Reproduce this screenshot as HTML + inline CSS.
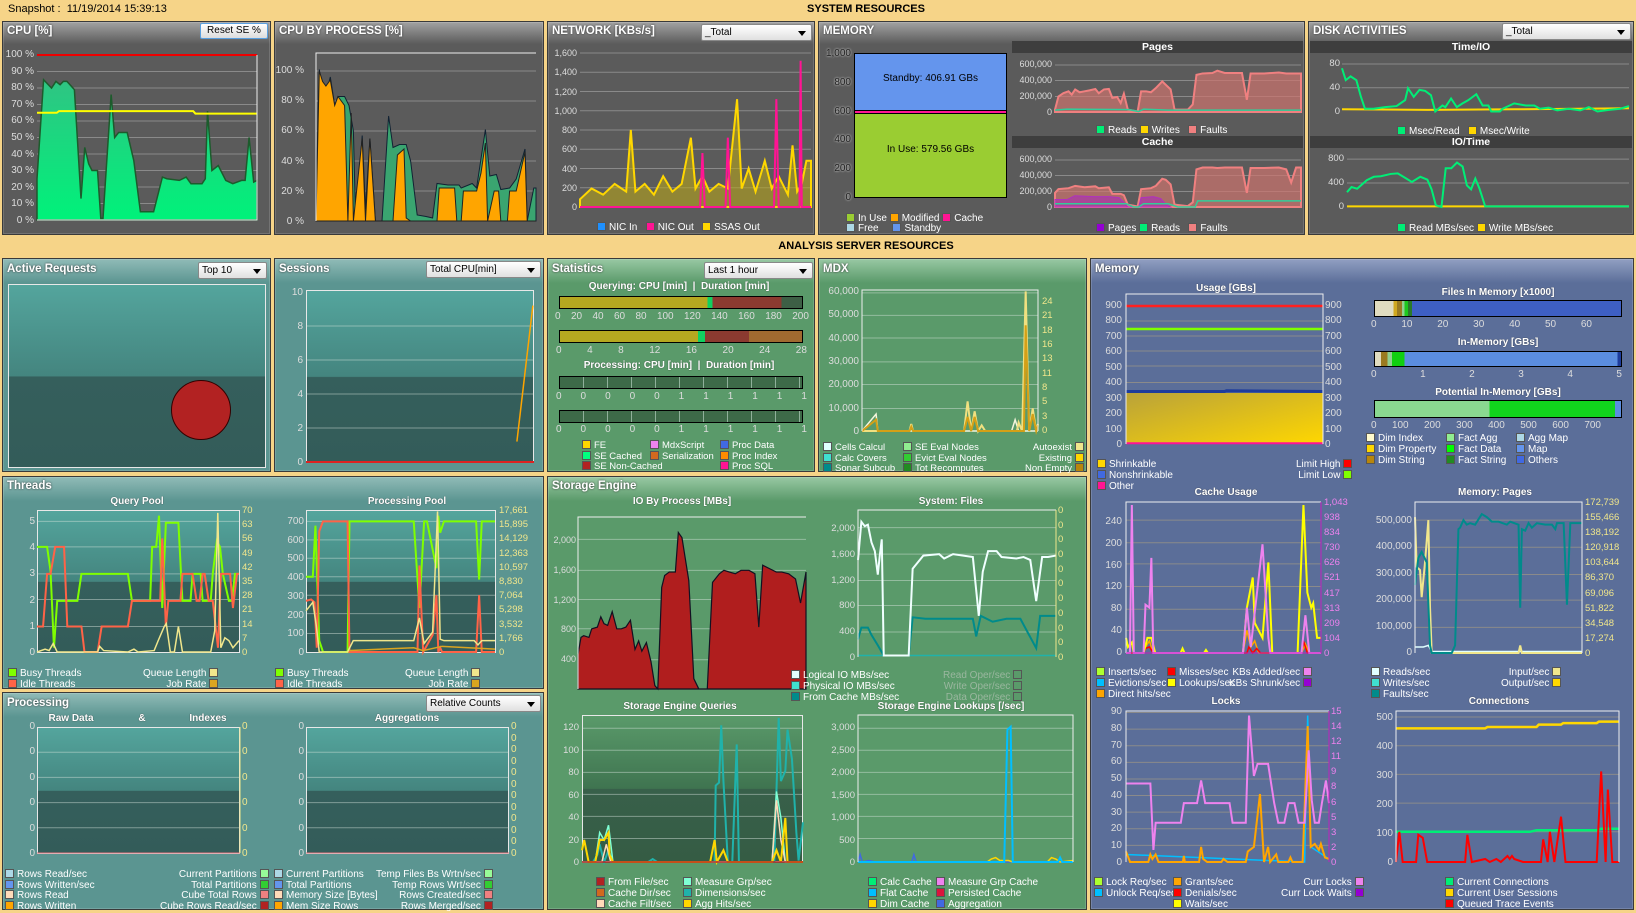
<!DOCTYPE html>
<html><head><meta charset="utf-8">
<style>
*{box-sizing:border-box}
body{margin:0;width:1636px;height:913px;overflow:hidden;background:#f6d488;font-family:"Liberation Sans",sans-serif;font-size:10px;position:relative}
.a{position:absolute}
.p{position:absolute;border:1px solid #3a3a3a;box-shadow:inset 0 0 0 1px rgba(255,255,255,.15)}
.gr{background:linear-gradient(#a2a2a2,#5b5b5b 22px,#5b5b5b)}
.te{background:linear-gradient(#90bbb7,#5b9591 24px,#5b9591)}
.gn{background:linear-gradient(#98c8a3,#5a9a6a 24px,#5a9a6a)}
.bl{background:linear-gradient(#919fc2,#5b6e99 24px,#5b6e99)}
.t{position:absolute;color:#fff;font-weight:bold;font-size:11.5px;text-shadow:0 0 2px #333;white-space:nowrap}
.s{position:absolute;color:#fff;font-weight:bold;font-size:10px;white-space:nowrap;transform:translateX(-50%);text-shadow:0 0 1px #333}
.yl{position:absolute;display:flex;flex-direction:column;justify-content:space-between;text-align:right;line-height:11px;color:#ddd;font-size:10px;white-space:nowrap}
.yr{text-align:left;color:#f0e68c}
.xl{position:absolute;display:flex;justify-content:space-between;color:#ddd;font-size:10px;line-height:11px}
.lg{position:absolute;color:#fff;font-size:10px;line-height:10px;white-space:nowrap}
.q{display:inline-block;width:9px;height:9px;border:1px solid #555;vertical-align:-1px;margin-right:3px}
.qr{margin:0 0 0 3px}
.dd{position:absolute;height:17px;border:1px solid #888;border-radius:2px;background:linear-gradient(#fff,#e0e0e0);font-size:10px;line-height:15px;padding-left:3px;color:#000}
.dd:after{content:"";position:absolute;right:5px;top:6px;border:4px solid transparent;border-top:5px solid #000}
.btn{position:absolute;border:1px solid #5aa0e0;border-radius:2px;background:linear-gradient(#fff,#dcdcdc);font-size:10px;line-height:14px;text-align:center;color:#000}
.pl{position:absolute;border:1px solid #e8e8e8}
.tg{background:linear-gradient(#54a59d,#44857f 50%,#355f5c 50.5%,#335c59)}
svg.c{position:absolute;overflow:visible}
svg.c *{vector-effect:non-scaling-stroke;fill:none;stroke-width:2}
svg.c .gl{stroke:#8a8a8a;stroke-width:1}
svg.c .gt{stroke:rgba(220,230,225,.45);stroke-width:1}
.band{position:absolute;background:#3e3e3e;color:#fff;font-weight:bold;text-align:center;font-size:10.5px;line-height:12px}
</style></head><body>

<div class="a" style="left:8px;top:3px;font-size:11px">Snapshot :&nbsp; 11/19/2014 15:39:13</div>
<div class="a" style="left:866px;top:3px;font-size:11px;font-weight:bold;transform:translateX(-50%)">SYSTEM RESOURCES</div>
<div class="a" style="left:866px;top:240px;font-size:11px;font-weight:bold;transform:translateX(-50%)">ANALYSIS SERVER RESOURCES</div>

<div class="p gr" style="left:2px;top:21px;width:269px;height:214px"></div>
<div class="t" style="left:7px;top:25px">CPU [%]</div>
<div class="btn" style="left:200px;top:23px;width:68px;height:16px">Reset SE %</div>
<div class="yl" style="left:3px;top:49px;width:31px;height:177px"><div>100 %</div><div>90 %</div><div>80 %</div><div>70 %</div><div>60 %</div><div>50 %</div><div>40 %</div><div>30 %</div><div>20 %</div><div>10 %</div><div>0 %</div></div>
<svg class="c" style="left:37px;top:55px;width:220px;height:165px" viewBox="0 0 100 100" preserveAspectRatio="none">
<defs><linearGradient id="cg" x1="0" y1="0" x2="0" y2="1"><stop offset="0" stop-color="#2fc483"/><stop offset="1" stop-color="#00f27a"/></linearGradient></defs>
<path class="gl" d="M0 10H100M0 20H100M0 30H100M0 40H100M0 50H100M0 60H100M0 70H100M0 80H100M0 90H100"/>
<polygon style="fill:url(#cg);stroke:#1d5b2c;stroke-width:1.5" points="0,100 0,75 3,15 6.6,20 8.6,16 10.5,18 12,16 13.6,16 15,18 17,21 20,87 21.7,56 23.5,66 25,70 27.5,70 29,99 30,99 33.7,24 35.3,50 37.1,47 41,47 44,64 47,95 50,95 53,95 57,74 59,75 64.7,76 67.8,74 70,78 75,78 76.5,75 77.5,34 79.5,70 82.4,67 85.8,76 89,78 93,76 94.6,76 96.4,50 98.5,77 100,76 100,100"/>
<path style="stroke:#e00;stroke-width:2" d="M0 0H100"/>
<polyline style="stroke:#ff0;stroke-width:2" points="0,35 9,35 10,34 71,34 72,35.5 100,35.5"/>
<path style="stroke:#eee;stroke-width:1" d="M100 0V100H0"/>
</svg>

<div class="p gr" style="left:274px;top:21px;width:270px;height:214px"></div>
<div class="t" style="left:279px;top:25px">CPU BY PROCESS [%]</div>
<div class="yl" style="left:270px;top:65px;width:34px;height:162px"><div>100 %</div><div>80 %</div><div>60 %</div><div>40 %</div><div>20 %</div><div>0 %</div></div>
<svg class="c" style="left:316px;top:53px;width:220px;height:168px" viewBox="0 0 100 112" preserveAspectRatio="none">
<path class="gl" d="M0 12H100M0 32H100M0 52H100M0 72H100M0 92H100"/>
<polygon style="fill:#3aa570;stroke:#123;stroke-width:1" points="0,112 0,97 1.5,11 3,27 4.5,28 6.5,16 8.5,35 10,29 13,29 15,35 17,52 18,112 21,55 22.5,104 24.5,57 27,112 30,112 33,42 35,63 38,61 41,61 43,72 46,108 50,109 53,110 55,87 60,88 65,88 66,90 71,87 73,90 77,51 79,82 82,81 84,91 88,90 91,84 95,64 96,112 99,90 100,90 100,112"/>
<polygon style="fill:#ffa500;stroke:#222;stroke-width:1" points="0,112 0,110 1.5,12 3,19 4.5,22 6.5,18 8.5,35 10,29 13,35 14.5,112 16,40 17,112 21,57 22.5,112 24.5,57 27,112 30,112 35,112 37,68 40,64 41,110 43,112 55,112 56,90 63,90 64,112 66,112 67,92 73,92 75,80 77,60 78,112 81,92 83,92 84,112 87,112 88,92 91,92 95,66 96,112 99,112 100,112"/>
<path style="stroke:#eee;stroke-width:1" d="M0 112V0H100"/>
</svg>

<div class="p gr" style="left:547px;top:21px;width:268px;height:214px"></div>
<div class="t" style="left:552px;top:25px">NETWORK [KBs/s]</div>
<div class="dd" style="left:701px;top:24px;width:111px">_Total</div>
<div class="yl" style="left:548px;top:48px;width:29px;height:165px;font-size:9px"><div>1,600</div><div>1,400</div><div>1,200</div><div>1,000</div><div>800</div><div>600</div><div>400</div><div>200</div><div>0</div></div>
<svg class="c" style="left:580px;top:53px;width:231px;height:154px" viewBox="0 0 100 100" preserveAspectRatio="none">
<path class="gl" d="M0 0H100M0 12.5H100M0 25H100M0 37.5H100M0 50H100M0 62.5H100M0 75H100M0 87.5H100"/>
<polygon style="fill:rgba(190,170,20,.55);stroke:#ffd700;stroke-width:2" points="0,100 0,95 5,88 10,92 15,85 20,90 22,50 24,90 28,85 32,92 36,80 40,90 44,85 48,55 50,88 53,80 56,90 60,85 64,88 68,30 70,88 73,75 76,90 80,70 83,88 86,80 90,92 92,60 94,90 96,85 98,70 100,70 100,100"/>
<polyline style="stroke:#ff1493;stroke-width:2" points="0,100 52,100 53,65 54,100 63,100 64,55 65,100 84,100 85,30 86,100 95,100 95.5,5 96,100 100,100"/>
</svg>
<div class="lg" style="left:597px;top:222px"><span class="q" style="background:#1e90ff"></span>NIC In &nbsp; <span class="q" style="background:#ff1493"></span>NIC Out &nbsp; <span class="q" style="background:#ffd700"></span>SSAS Out</div>

<div class="p gr" style="left:818px;top:21px;width:487px;height:214px"></div>
<div class="t" style="left:823px;top:25px">MEMORY</div>
<div class="yl" style="left:818px;top:48px;width:33px;height:155px;color:#222;text-shadow:0 0 2px #fff"><div>1,000</div><div>800</div><div>600</div><div>400</div><div>200</div><div>0</div></div>
<div class="a" style="left:854px;top:53px;width:153px;height:145px;border:1px solid #000;background:#9acd32">
<div class="a" style="left:0;top:0;width:151px;height:57px;background:#6495ed;border-bottom:1px solid #000"></div>
<div class="a" style="left:0;top:57px;width:151px;height:3px;background:#ff1493;border-bottom:1px solid #000"></div>
<div class="a" style="left:0;top:19px;width:151px;text-align:center;font-size:10px">Standby: 406.91 GBs</div>
<div class="a" style="left:0;top:90px;width:151px;text-align:center;font-size:10px">In Use: 579.56 GBs</div>
</div>
<div class="lg" style="left:846px;top:213px"><span class="q" style="background:#9acd32"></span>In Use <span class="q" style="background:#ffa500"></span>Modified <span class="q" style="background:#ff1493"></span>Cache</div>
<div class="lg" style="left:846px;top:223px"><span class="q" style="background:#add8e6"></span>Free &nbsp;&nbsp;&nbsp;&nbsp;<span class="q" style="background:#6495ed"></span>Standby</div>
<div class="band" style="left:1012px;top:41px;width:291px">Pages</div>
<div class="yl" style="left:1008px;top:59px;width:44px;height:59px;font-size:9px"><div>600,000</div><div>400,000</div><div>200,000</div><div>0</div></div>
<svg class="c" style="left:1055px;top:65px;width:246px;height:47px" viewBox="0 0 100 100" preserveAspectRatio="none">
<path class="gl" d="M0 0H100M0 33H100M0 67H100"/>
<polygon style="fill:rgba(205,115,110,.7);stroke:#f08080;stroke-width:2" points="0,100 0,95 1.4,67 3.4,60 5.5,56 6.8,63 8.2,52 10,58 12,56 14,54 16.4,51 17.8,60 19.9,52 21.9,51 23.3,70 25.3,68 26.7,81 28,61 29.6,95 33.6,99 35,56 37,56 39,58 41,49 43.6,35 45,42 47,52 48.6,95 54,95 56,84 57.5,21 60,18 64,17 66,12 69,17 76,17 78,74 79.5,18 85,18 91,16 94,18 100,18 100,100"/>
<polyline style="stroke:#3c9;stroke-width:1.5" points="0,96 5,94 30,95 34,99 36,94 46,96 100,96"/>
</svg>
<div class="lg" style="left:1096px;top:125px"><span class="q" style="background:#00ee76"></span>Reads <span class="q" style="background:#ffd700"></span>Writes &nbsp; <span class="q" style="background:#f08080"></span>Faults</div>
<div class="band" style="left:1012px;top:136px;width:291px">Cache</div>
<div class="yl" style="left:1008px;top:154px;width:44px;height:59px;font-size:9px"><div>600,000</div><div>400,000</div><div>200,000</div><div>0</div></div>
<svg class="c" style="left:1055px;top:160px;width:246px;height:47px" viewBox="0 0 100 100" preserveAspectRatio="none">
<path class="gl" d="M0 0H100M0 33H100M0 67H100"/>
<polygon style="fill:rgba(205,115,110,.7);stroke:#f08080;stroke-width:2" points="0,100 0,70 1.4,62 5.5,60 8.2,55 12,58 16.4,56 17.8,60 21.9,58 23.3,72 26.7,72 28,75 29.6,95 33.6,99 35,62 39,60 41,55 43.6,40 45,42 47,52 48.6,95 54,98 56,90 57.5,20 60,16 64,16 66,17 69,16 76,16 78,70 79.5,17 85,17 91,16 94,20 96,48 98,16 100,16 100,100"/>
<polygon style="fill:rgba(170,40,190,.55);stroke:#b030c0;stroke-width:1" points="0,100 0,84 5,84 8,76 16,78 22,78 26,80 28,90 29.6,100 34,100 35,80 40,78 43,82 45,94 47,100 0,100"/>
<polyline style="stroke:#3c9;stroke-width:1.5" points="0,93 29,93 32,100 34,100 36,93 46,93 50,100 57,100 58,87 100,87"/>
</svg>
<div class="lg" style="left:1096px;top:223px"><span class="q" style="background:#9400d3"></span>Pages <span class="q" style="background:#00ee76"></span>Reads &nbsp; <span class="q" style="background:#f08080"></span>Faults</div>

<div class="p gr" style="left:1308px;top:21px;width:326px;height:214px"></div>
<div class="t" style="left:1313px;top:25px">DISK ACTIVITIES</div>
<div class="dd" style="left:1502px;top:23px;width:129px">_Total</div>
<div class="band" style="left:1310px;top:41px;width:322px">Time/IO</div>
<div class="yl" style="left:1320px;top:58px;width:20px;height:59px;font-size:9.5px"><div>80</div><div>40</div><div>0</div></div>
<svg class="c" style="left:1342px;top:58px;width:287px;height:54px" viewBox="0 0 100 100" preserveAspectRatio="none">
<path class="gl" d="M0 11H100M0 55H100"/>
<polyline style="stroke:#ffd700;stroke-width:2" points="0,95 30,96 60,95 100,93"/>
<polyline style="stroke:#00ee76;stroke-width:2" points="0,19 1.3,41 3,34 5,41 6.6,72 8,94 11,94 15,91 19,89 22,78 23,56 25,72 27,59 29,61 31,69 32.5,99 35,88 36,91 38,75 40,91 42,84 44,78 46.8,67 49,88 51,88 52,99 55,99 56,94 60,84 64,88 67,88 69,94 72,92 75,97 79,94 83,97 86,91 89,99 93,96 97,94 100,89"/>
</svg>
<div class="lg" style="left:1397px;top:126px"><span class="q" style="background:#00ee76"></span>Msec/Read &nbsp; <span class="q" style="background:#ffd700"></span>Msec/Write</div>
<div class="band" style="left:1310px;top:136px;width:322px">IO/Time</div>
<div class="yl" style="left:1320px;top:153px;width:24px;height:59px;font-size:9.5px"><div>800</div><div>400</div><div>0</div></div>
<svg class="c" style="left:1347px;top:150px;width:282px;height:57px" viewBox="0 0 100 100" preserveAspectRatio="none">
<path class="gl" d="M0 16H100M0 58H100"/>
<polyline style="stroke:#ffd700;stroke-width:2" points="0,99 100,99"/>
<polyline style="stroke:#00ee76;stroke-width:2" points="0,74 1.6,65 3.6,68 7,53 9.5,47 12,46 15.5,42 18,41 21,50 23,56 26,47 28.5,52 30,69 31.5,97 33.5,100 35,32 37,32 39,22 41,29 42.5,62 44,69 45.5,50 47,68 49,99 100,99"/>
</svg>
<div class="lg" style="left:1397px;top:223px"><span class="q" style="background:#00ee76"></span>Read MBs/sec <span class="q" style="background:#ffd700"></span>Write MBs/sec</div>

<div class="p te" style="left:2px;top:258px;width:269px;height:214px"></div>
<div class="t" style="left:7px;top:263px">Active Requests</div>
<div class="dd" style="left:198px;top:262px;width:69px">Top 10</div>
<div class="pl tg" style="left:8px;top:284px;width:258px;height:184px"></div>
<div class="a" style="left:171px;top:380px;width:60px;height:60px;border-radius:50%;background:#b22222;border:1px solid #300"></div>

<div class="p te" style="left:274px;top:258px;width:270px;height:214px"></div>
<div class="t" style="left:279px;top:263px">Sessions</div>
<div class="dd" style="left:426px;top:261px;width:115px">Total CPU[min]</div>
<div class="pl tg" style="left:306px;top:290px;width:228px;height:173px"></div>
<div class="yl" style="left:290px;top:287px;width:13px;height:181px"><div>10</div><div>8</div><div>6</div><div>4</div><div>2</div><div>0</div></div>
<svg class="c" style="left:306px;top:292px;width:228px;height:170px" viewBox="0 0 100 100" preserveAspectRatio="none">
<path class="gt" d="M0 20H100M0 40H100M0 60H100M0 80H100"/>
<path style="stroke:#d22;stroke-width:2" d="M0 100H100"/>
<polyline style="stroke:#ffa500;stroke-width:1.5" points="92.5,88 99.5,8"/>
</svg>

<div class="p gn" style="left:547px;top:258px;width:268px;height:214px"></div>
<div class="t" style="left:552px;top:263px">Statistics</div>
<div class="dd" style="left:704px;top:262px;width:109px">Last 1 hour</div>
<div class="s" style="left:679px;top:281px">Querying: CPU [min] &nbsp;|&nbsp; Duration [min]</div>
<div class="a" style="left:559px;top:296px;width:244px;height:13px;border:1px solid #000;background:linear-gradient(90deg,#b5a820 0,#b5a820 61%,#10d060 61%,#10d060 63%,#8b3a30 63%,#8b3a30 91.5%,#3d5f45 91.5%)"></div>
<div class="xl" style="left:555px;top:311px;width:254px"><div>0</div><div>20</div><div>40</div><div>60</div><div>80</div><div>100</div><div>120</div><div>140</div><div>160</div><div>180</div><div>200</div></div>
<div class="a" style="left:559px;top:330px;width:244px;height:13px;border:1px solid #000;background:linear-gradient(90deg,#b5a820 0,#b5a820 57%,#10d060 57%,#10d060 60%,#8b3a30 60%,#8b3a30 78%,#a06a30 78%)"></div>
<div class="xl" style="left:556px;top:345px;width:251px"><div>0</div><div>4</div><div>8</div><div>12</div><div>16</div><div>20</div><div>24</div><div>28</div></div>
<div class="s" style="left:679px;top:360px">Processing: CPU [min] &nbsp;|&nbsp; Duration [min]</div>
<div class="a" style="left:559px;top:376px;width:244px;height:13px;border:1px solid #000;background:repeating-linear-gradient(90deg,#3d6a48 0,#3d6a48 23px,#8fb09a 23px,#8fb09a 24px)"></div>
<div class="xl" style="left:556px;top:391px;width:251px"><div>0</div><div>0</div><div>0</div><div>0</div><div>0</div><div>1</div><div>1</div><div>1</div><div>1</div><div>1</div><div>1</div></div>
<div class="a" style="left:559px;top:410px;width:244px;height:13px;border:1px solid #000;background:repeating-linear-gradient(90deg,#3d6a48 0,#3d6a48 23px,#8fb09a 23px,#8fb09a 24px)"></div>
<div class="xl" style="left:556px;top:424px;width:251px"><div>0</div><div>0</div><div>0</div><div>0</div><div>0</div><div>1</div><div>1</div><div>1</div><div>1</div><div>1</div><div>1</div></div>
<div class="lg" style="left:582px;top:440px;line-height:9.5px;font-size:9.5px"><span class="q" style="background:#ffd700"></span>FE<br><span class="q" style="background:#00ff7f"></span>SE Cached<br><span class="q" style="background:#b22222"></span>SE Non-Cached</div>
<div class="lg" style="left:650px;top:440px;line-height:9.5px;font-size:9.5px"><span class="q" style="background:#ee82ee"></span>MdxScript<br><span class="q" style="background:#d2691e"></span>Serialization</div>
<div class="lg" style="left:720px;top:440px;line-height:9.5px;font-size:9.5px"><span class="q" style="background:#4169e1"></span>Proc Data<br><span class="q" style="background:#ff8c00"></span>Proc Index<br><span class="q" style="background:#ff1493"></span>Proc SQL</div>

<div class="p gn" style="left:818px;top:258px;width:269px;height:214px"></div>
<div class="t" style="left:823px;top:263px">MDX</div>
<div class="yl" style="left:818px;top:286px;width:41px;height:151px"><div>60,000</div><div>50,000</div><div>40,000</div><div>30,000</div><div>20,000</div><div>10,000</div><div>0</div></div>
<div class="yl yr" style="left:1042px;top:296px;width:20px;height:140px;font-size:9.5px"><div>24</div><div>21</div><div>18</div><div>16</div><div>13</div><div>11</div><div>8</div><div>5</div><div>3</div><div>0</div></div>
<svg class="c" style="left:862px;top:290px;width:176px;height:141px" viewBox="0 0 100 100" preserveAspectRatio="none">
<path class="gt" d="M0 2H100M0 18H100M0 34H100M0 51H100M0 67H100M0 84H100"/>
<polyline style="stroke:#f5f5dc;stroke-width:1.5" points="0,100 8,88 9,100 85,100 87,92 89,100 100,100"/>
<polyline style="stroke:#f0e080;stroke-width:2" points="0,100 27,100 28,95 29,100 58,100 60,79 62,100 64,86 66,100 68,96 70,100 88,100 89,94 91,100 93,1 95,100 97,84 99,100 100,95"/>
<polyline style="stroke:#d4a017;stroke-width:2" points="0,100 8,92 9,100 27,100 28,97 29,100 58,100 60,90 62,100 64,90 66,100 92,100 93,25 95,100 97,88 99,100 100,96"/>
<path style="stroke:#eee;stroke-width:1" d="M0 100V0H100V100"/>
</svg>
<div class="lg" style="left:823px;top:442px;line-height:9.7px;font-size:9.5px"><span class="q" style="background:#e0ffff"></span>Cells Calcul<br><span class="q" style="background:#40e0d0"></span>Calc Covers<br><span class="q" style="background:#008b8b"></span>Sonar Subcub</div>
<div class="lg" style="left:903px;top:442px;line-height:9.7px;font-size:9.5px"><span class="q" style="background:#90ee90"></span>SE Eval Nodes<br><span class="q" style="background:#32cd32"></span>Evict Eval Nodes<br><span class="q" style="background:#228b22"></span>Tot Recomputes</div>
<div class="lg" style="right:552px;top:442px;line-height:9.7px;text-align:right;font-size:9.5px">Autoexist<span class="q qr" style="background:#f0e68c"></span><br>Existing<span class="q qr" style="background:#ffd700"></span><br>Non Empty<span class="q qr" style="background:#b8860b"></span></div>

<div class="p te" style="left:2px;top:476px;width:542px;height:213px"></div>
<div class="t" style="left:7px;top:480px">Threads</div>
<div class="s" style="left:137px;top:496px">Query Pool</div>
<div class="pl tg" style="left:37px;top:510px;width:203px;height:143px"></div>
<div class="yl" style="left:25px;top:516px;width:10px;height:142px"><div>5</div><div>4</div><div>3</div><div>2</div><div>1</div><div>0</div></div>
<div class="yl yr" style="left:242px;top:505px;width:16px;height:153px;font-size:9.5px"><div>70</div><div>63</div><div>56</div><div>49</div><div>42</div><div>35</div><div>28</div><div>21</div><div>14</div><div>7</div><div>0</div></div>
<svg class="c" style="left:37px;top:510px;width:202px;height:142px" viewBox="0 0 100 100" preserveAspectRatio="none">
<path class="gt" d="M0 8H100M0 26H100M0 45H100M0 63H100M0 82H100"/>
<polyline style="stroke:#7fff00;stroke-width:2" points="0,26 5,26 6.7,43 8.4,97 10,64 20,64 22,45 45,45 47,64 56,64 57,26 59,26 60.4,4 62,69 63.8,9 70,9 72,64 76,64 77,45 81,45 82,64 86,64 87,45 89,22 90.6,26 92,45 95,64 96.5,64 98,45 100,45"/>
<polyline style="stroke:#ff6347;stroke-width:2" points="0,82 3,82 5,45 6.7,45 9,26 13.4,26 15,82 22,82 23.5,100 30,100 32,82 45,82 47,64 61,64 62,20 63.8,82 65,64 71,64 72,45 77,45 79,64 80.5,64 82,45 83,45 85,64 87,64 89.6,97 91,45 95.6,45 97,69 99,45 100,45"/>
<polyline style="stroke:#f0e68c;stroke-width:1.5" points="0,100 4,98 6,99 8,94 10,100 30,100 31,96 33,99 45,100 48,98 50,100 58,99 60,92 63,82 64,80 66,100 68,100 70,82 72,100 86,100 88,85 89.5,2 91,97 93,90 95,92 97,97 100,92"/>
</svg>
<div class="s" style="left:407px;top:496px">Processing Pool</div>
<div class="pl tg" style="left:306px;top:510px;width:190px;height:143px"></div>
<div class="yl" style="left:283px;top:516px;width:21px;height:142px"><div>700</div><div>600</div><div>500</div><div>400</div><div>300</div><div>200</div><div>100</div><div>0</div></div>
<div class="yl yr" style="left:499px;top:505px;width:44px;height:153px;font-size:9.5px"><div>17,661</div><div>15,895</div><div>14,129</div><div>12,363</div><div>10,597</div><div>8,830</div><div>7,064</div><div>5,298</div><div>3,532</div><div>1,766</div><div>0</div></div>
<svg class="c" style="left:306px;top:510px;width:189px;height:142px" viewBox="0 0 100 100" preserveAspectRatio="none">
<path class="gt" d="M0 8H100M0 21H100M0 34H100M0 47H100M0 60H100M0 73H100M0 87H100"/>
<polyline style="stroke:#7fff00;stroke-width:2" points="0,47 3.6,47 5,11 7,92 9,100 22,100 23,8 57,8 60,69 62.5,8 64,8 69,41 70,4 71,16 73,8 90,8 91.6,49 93,8 100,8"/>
<polyline style="stroke:#ff6347;stroke-width:2" points="0,64 2.7,63 4.5,65 5.7,97 7,15 9,8 22,8 23,100 59,100 60,39 62,100 67,88 69,60 70,100 71,97 72,100 90,100 91.6,60 93,100 100,100"/>
<polyline style="stroke:#daa520;stroke-width:1.5" points="22,99 57,97 62,99 72,96 100,98"/>
<polyline style="stroke:#f0e68c;stroke-width:1.5" points="0,71 1.8,68 3.6,65 5.4,81 7,100 22,100 25,92 57,92 60,76 62.5,94 67,86 69.6,1 71,91 73,92 89,92 91,95 93,92 100,92"/>
</svg>
<div class="lg" style="left:8px;top:668px;line-height:10px"><span class="q" style="background:#7fff00"></span>Busy Threads<br><span class="q" style="background:#ff6347"></span>Idle Threads</div>
<div class="lg" style="left:143px;top:668px;line-height:10px;text-align:right">Queue Length<span class="q qr" style="background:#f0e68c"></span><br>Job Rate<span class="q qr" style="background:#daa520"></span></div>
<div class="lg" style="left:275px;top:668px;line-height:10px"><span class="q" style="background:#7fff00"></span>Busy Threads<br><span class="q" style="background:#ff6347"></span>Idle Threads</div>
<div class="lg" style="left:405px;top:668px;line-height:10px;text-align:right">Queue Length<span class="q qr" style="background:#f0e68c"></span><br>Job Rate<span class="q qr" style="background:#daa520"></span></div>

<div class="p te" style="left:2px;top:692px;width:542px;height:218px"></div>
<div class="t" style="left:7px;top:697px">Processing</div>
<div class="dd" style="left:426px;top:695px;width:115px">Relative Counts</div>
<div class="s" style="left:71px;top:713px">Raw Data</div>
<div class="s" style="left:142px;top:713px">&amp;</div>
<div class="s" style="left:208px;top:713px">Indexes</div>
<div class="s" style="left:407px;top:713px">Aggregations</div>
<div class="pl tg" style="left:37px;top:727px;width:203px;height:127px"></div>
<div class="pl tg" style="left:306px;top:727px;width:203px;height:127px"></div>
<svg class="c" style="left:37px;top:727px;width:203px;height:126px" viewBox="0 0 100 100" preserveAspectRatio="none"><path class="gt" d="M0 20H100M0 40H100M0 60H100M0 80H100"/><path style="stroke:#e0707a;stroke-width:1" d="M0 100H100"/><path style="stroke:#f0e68c;stroke-width:1" d="M100 0V100"/></svg>
<svg class="c" style="left:306px;top:727px;width:203px;height:126px" viewBox="0 0 100 100" preserveAspectRatio="none"><path class="gt" d="M0 20H100M0 40H100M0 60H100M0 80H100"/><path style="stroke:#e0707a;stroke-width:1" d="M0 100H100"/></svg>
<div class="yl" style="left:25px;top:721px;width:10px;height:138px"><div>0</div><div>0</div><div>0</div><div>0</div><div>0</div><div>0</div></div>
<div class="yl yr" style="left:242px;top:721px;width:10px;height:138px"><div>0</div><div>0</div><div>0</div><div>0</div><div>0</div><div>0</div></div>
<div class="yl" style="left:294px;top:721px;width:10px;height:138px"><div>0</div><div>0</div><div>0</div><div>0</div><div>0</div><div>0</div></div>
<div class="yl yr" style="left:511px;top:721px;width:10px;height:138px"><div>0</div><div>0</div><div>0</div><div>0</div><div>0</div><div>0</div><div>0</div><div>0</div><div>0</div><div>0</div><div>0</div><div>0</div></div>
<div class="lg" style="left:5px;top:869px;line-height:9.5px"><span class="q" style="background:#add8e6"></span>Rows Read/sec<br><span class="q" style="background:#6495ed"></span>Rows Written/sec<br><span class="q" style="background:#ffdab9"></span>Rows Read<br><span class="q" style="background:#ffa500"></span>Rows Written</div>
<div class="lg" style="left:160px;top:869px;line-height:9.5px;text-align:right">Current Partitions<span class="q qr" style="background:#98fb98"></span><br>Total Partitions<span class="q qr" style="background:#32cd32"></span><br>Cube Total Rows<span class="q qr" style="background:#f08080"></span><br>Cube Rows Read/sec<span class="q qr" style="background:#b22222"></span></div>
<div class="lg" style="left:274px;top:869px;line-height:9.5px"><span class="q" style="background:#add8e6"></span>Current Partitions<br><span class="q" style="background:#6495ed"></span>Total Partitions<br><span class="q" style="background:#ffdab9"></span>Memory Size [Bytes]<br><span class="q" style="background:#ffa500"></span>Mem Size Rows</div>
<div class="lg" style="left:376px;top:869px;line-height:9.5px;text-align:right">Temp Files Bs Wrtn/sec<span class="q qr" style="background:#98fb98"></span><br>Temp Rows Wrt/sec<span class="q qr" style="background:#32cd32"></span><br>Rows Created/sec<span class="q qr" style="background:#f08080"></span><br>Rows Merged/sec<span class="q qr" style="background:#b22222"></span></div>

<div class="p gn" style="left:547px;top:476px;width:540px;height:434px"></div>
<div class="t" style="left:552px;top:480px">Storage Engine</div>
<div class="s" style="left:682px;top:496px">IO By Process [MBs]</div>
<div class="yl" style="left:548px;top:535px;width:28px;height:130px;font-size:9px"><div>2,000</div><div>1,600</div><div>1,200</div><div>800</div><div>400</div></div>
<svg class="c" style="left:578px;top:517px;width:228px;height:172px" viewBox="0 0 100 100" preserveAspectRatio="none">
<path class="gt" d="M0 13H100M0 31H100M0 48H100M0 65H100M0 83H100"/>
<polygon style="fill:#b01e1e;stroke:#112;stroke-width:1.2" points="0,100 0,80 1.3,70 2.5,69 4.8,70 6,65 8.5,64 10,58 11.4,62 13,63 15,55 17,65 19,65 21,64 23,60 25,77 26.6,72 28,78 30,73 32,84 33.7,98 35,100 36.7,41 38,34 40,32 42.7,32 44,9 45.6,12 48.6,37 50.8,94 53,100 56.7,100 59,38 62,33 64,31 66.4,32 69,33 71.5,31 75,31 77.6,33 79.3,64 81,28 84,30 87,32 89.4,32 92.4,33 95.4,36 97.6,50 100,32 100,100"/>
<path style="stroke:#eee;stroke-width:1" d="M0 100V0H100"/>
</svg>
<div class="s" style="left:951px;top:496px">System: Files</div>
<div class="yl" style="left:820px;top:523px;width:35px;height:140px;font-size:9.5px"><div>2,000</div><div>1,600</div><div>1,200</div><div>800</div><div>400</div><div>0</div></div>
<div class="yl yr" style="left:1058px;top:505px;width:10px;height:158px;font-size:9.5px"><div>0</div><div>0</div><div>0</div><div>0</div><div>0</div><div>0</div><div>0</div><div>0</div><div>0</div><div>0</div><div>0</div></div>
<svg class="c" style="left:858px;top:510px;width:198px;height:147px" viewBox="0 0 100 100" preserveAspectRatio="none">
<path class="gt" d="M0 12H100M0 30H100M0 48H100M0 65H100M0 83H100"/>
<polyline style="stroke:#20b2aa;stroke-width:1.5" points="0,99 100,99"/>
<polyline style="stroke:#008b8b;stroke-width:2" points="0,88 1.7,80 5,80 6.8,85 10,92 13,99 25.6,99 27.6,73 34,74 41,74 58,74 59.7,86 62,72 68,76 75,74 82,74 90,94 92,72 100,72"/>
<polyline style="stroke:#f0ffff;stroke-width:2" points="0,34 1.7,8 3.4,11 5,10 6.8,22 8.5,28 10,44 11,31 12,20 13,99 25.6,99 27.6,40 30,36 33,31 41,30 43.5,33 48,30 58,32 61,72 63,42 65.7,28 70,28 72.5,32 80,33 83.6,32 87,34 90,62 93,32 96,32 100,31"/>
<path style="stroke:#eee;stroke-width:1" d="M0 100V0H100"/><path style="stroke:#f0e68c;stroke-width:1" d="M100 0V100"/>
</svg>
<div class="lg" style="left:791px;top:670px;line-height:10px"><span class="q" style="background:#e0ffff"></span>Logical IO MBs/sec<br><span class="q" style="background:#40e0d0"></span>Physical IO MBs/sec<br><span class="q" style="background:#008b8b"></span>From Cache MBs/sec</div>
<div class="lg" style="left:943px;top:670px;line-height:10px;text-align:right;color:#9ab79f">Read Oper/sec<span class="q qr" style="background:transparent"></span><br>Write Oper/sec<span class="q qr" style="background:transparent"></span><br>Data Oper/sec<span class="q qr" style="background:transparent"></span></div>

<div class="s" style="left:680px;top:701px">Storage Engine Queries</div>
<div class="a" style="left:582px;top:715px;width:221px;height:147px;border:1px solid #e8e8e8;background:linear-gradient(#5a9a6a,#3f7450 50%,#38604a 50.5%,#355c44)"></div>
<div class="yl" style="left:560px;top:722px;width:19px;height:146px;font-size:9.5px"><div>120</div><div>100</div><div>80</div><div>60</div><div>40</div><div>20</div><div>0</div></div>
<svg class="c" style="left:582px;top:715px;width:221px;height:147px" viewBox="0 0 100 100" preserveAspectRatio="none">
<path class="gt" d="M0 9H100M0 24H100M0 39H100M0 54H100M0 69H100M0 84H100"/>
<polyline style="stroke:#20b2aa;stroke-width:2" points="0,100 5,100 7,95 8,88 10,100 12,92 14,100 30,100 32,98 34,100 60,100 60.5,48 62,46 63,7 64,45 66,100 68,100 70,20 71,100 87,100 89,2 90,45 92,38 93,10 95,30 97,80 98,99 100,73"/>
<polyline style="stroke:#7fffd4;stroke-width:1.5" points="0,100 6,100 8,80 10,85 12,75 14,100 86,100 88,52 90,70 92,100 100,100"/>
<polyline style="stroke:#ffdab9;stroke-width:1.5" points="0,100 9,100 11,88 13,100 86,100 88,58 90,85 92,100 100,100"/>
<polyline style="stroke:#ffd700;stroke-width:2" points="0,92 1,85 3,100 6,100 8,85 10,85 12,80 12.5,95 14,100 58,100 60,85 61,100 64,92 66,100 86,100 88,92 90,100 92,70 93,100 100,100"/>
<polyline style="stroke:#b22222;stroke-width:1.5" points="0,100 100,100"/>
</svg>
<div class="lg" style="left:596px;top:877px;line-height:10px"><span class="q" style="background:#b22222"></span>From File/sec<br><span class="q" style="background:#d2691e"></span>Cache Dir/sec<br><span class="q" style="background:#ffdab9"></span>Cache Filt/sec</div>
<div class="lg" style="left:683px;top:877px;line-height:10px"><span class="q" style="background:#7fffd4"></span>Measure Grp/sec<br><span class="q" style="background:#20b2aa"></span>Dimensions/sec<br><span class="q" style="background:#ffd700"></span>Agg Hits/sec</div>

<div class="s" style="left:951px;top:701px">Storage Engine Lookups [/sec]</div>
<div class="yl" style="left:822px;top:722px;width:33px;height:146px;font-size:9.5px"><div>3,000</div><div>2,500</div><div>2,000</div><div>1,500</div><div>1,000</div><div>500</div><div>0</div></div>
<svg class="c" style="left:858px;top:715px;width:215px;height:147px" viewBox="0 0 100 100" preserveAspectRatio="none">
<path class="gt" d="M0 9H100M0 24H100M0 39H100M0 54H100M0 69H100M0 84H100"/>
<polyline style="stroke:#4169e1;stroke-width:1.5" points="0,100 1,95 2,100 5,99 8,100 25,100 26,95 27,100 100,100"/>
<polyline style="stroke:#ffd700;stroke-width:1.5" points="0,100 60,100 62,98 64,97 66,99 70,99 72,100 88,100 90,97 92,98 94,100 100,99"/>
<polyline style="stroke:#00bfff;stroke-width:2" points="0,100 68,100 69.5,10 71,8 72,100 93,100 94,97 95,100 100,100"/>
<path style="stroke:#eee;stroke-width:1" d="M0 100V0H100V100"/>
</svg>
<div class="lg" style="left:868px;top:877px;line-height:10px"><span class="q" style="background:#00ee76"></span>Calc Cache<br><span class="q" style="background:#00bfff"></span>Flat Cache<br><span class="q" style="background:#ffd700"></span>Dim Cache</div>
<div class="lg" style="left:936px;top:877px;line-height:10px"><span class="q" style="background:#ee82ee"></span>Measure Grp Cache<br><span class="q" style="background:#dc143c"></span>Persisted Cache<br><span class="q" style="background:#4169e1"></span>Aggregation</div>

<div class="p bl" style="left:1090px;top:258px;width:544px;height:652px"></div>
<div class="t" style="left:1095px;top:263px">Memory</div>
<div class="s" style="left:1226px;top:283px">Usage [GBs]</div>
<div class="yl" style="left:1100px;top:300px;width:22px;height:150px"><div>900</div><div>800</div><div>700</div><div>600</div><div>500</div><div>400</div><div>300</div><div>200</div><div>100</div><div>0</div></div>
<div class="yl" style="left:1325px;top:300px;width:22px;height:150px;text-align:left;color:#ddd"><div>900</div><div>800</div><div>700</div><div>600</div><div>500</div><div>400</div><div>300</div><div>200</div><div>100</div><div>0</div></div>
<svg class="c" style="left:1126px;top:294px;width:197px;height:150px" viewBox="0 0 100 100" preserveAspectRatio="none">
<defs><linearGradient id="yg" x1="0" y1="0" x2="1" y2="1"><stop offset="0" stop-color="#b9a23a"/><stop offset="1" stop-color="#ffd700"/></linearGradient></defs>
<path class="gl" d="M0 18H100M0 28H100M0 38H100M0 48H100M0 59H100M0 69H100M0 79H100M0 89H100"/>
<polygon style="fill:url(#yg);stroke:none" points="0,100 0,66 100,66 100,100"/>
<polyline style="stroke:#1e3c9c;stroke-width:3" points="0,65 50,65 51,64.5 100,65"/>
<path style="stroke:#ff1493;stroke-width:2" d="M0 99.5H100"/>
<path style="stroke:#ff2020;stroke-width:2.5" d="M0 8H100"/>
<path style="stroke:#7fff00;stroke-width:2.5" d="M0 23.3H100"/>
<path style="stroke:#eee;stroke-width:1" d="M0 100V0H100V100"/>
</svg>
<div class="lg" style="left:1097px;top:459px;line-height:10px"><span class="q" style="background:#ffd700"></span>Shrinkable<br><span class="q" style="background:#4169e1"></span>Nonshrinkable<br><span class="q" style="background:#ff1493"></span>Other</div>
<div class="lg" style="left:1296px;top:459px;line-height:10px;text-align:right">Limit High<span class="q qr" style="background:#f00"></span><br>Limit Low<span class="q qr" style="background:#7fff00"></span></div>

<div class="s" style="left:1498px;top:287px">Files In Memory [x1000]</div>
<div class="a" style="left:1374px;top:300px;width:248px;height:17px;border:1px solid #000;background:linear-gradient(90deg,#e0dcc0 0,#e0dcc0 7.5%,#d0a820 7.5%,#d0a820 9%,#9a7a20 9%,#9a7a20 11%,#90d090 11%,#90d090 12%,#1ec81e 12%,#1ec81e 13.5%,#2a7a2a 13.5%,#2a7a2a 15%,#3e5fc4 15%)"></div>
<div class="xl" style="left:1371px;top:319px;width:221px"><div>0</div><div>10</div><div>20</div><div>30</div><div>40</div><div>50</div><div>60</div></div>
<div class="s" style="left:1498px;top:337px">In-Memory [GBs]</div>
<div class="a" style="left:1374px;top:351px;width:248px;height:16px;border:1px solid #000;background:linear-gradient(90deg,#e0dcc0 0,#e0dcc0 2.5%,#9a7a20 2.5%,#9a7a20 5%,#90d090 5%,#90d090 7%,#10d010 7%,#10d010 12%,#5b8ddf 12%,#5b8ddf 98.5%,#1e3c9c 98.5%)"></div>
<div class="xl" style="left:1371px;top:369px;width:251px"><div>0</div><div>1</div><div>2</div><div>3</div><div>4</div><div>5</div></div>
<div class="s" style="left:1498px;top:387px">Potential In-Memory [GBs]</div>
<div class="a" style="left:1374px;top:400px;width:248px;height:18px;border:1px solid #000;background:linear-gradient(90deg,#8ad890 0,#8ad890 46.5%,#11d41d 46.5%,#11d41d 97.5%,#5b8ddf 97.5%)"></div>
<div class="xl" style="left:1371px;top:420px;width:230px"><div>0</div><div>100</div><div>200</div><div>300</div><div>400</div><div>500</div><div>600</div><div>700</div></div>
<div class="lg" style="left:1366px;top:433px;line-height:10px"><span class="q" style="background:#fffacd"></span>Dim Index<br><span class="q" style="background:#ffd700"></span>Dim Property<br><span class="q" style="background:#b8860b"></span>Dim String</div>
<div class="lg" style="left:1446px;top:433px;line-height:10px"><span class="q" style="background:#90ee90"></span>Fact Agg<br><span class="q" style="background:#00ff00"></span>Fact Data<br><span class="q" style="background:#228b22"></span>Fact String</div>
<div class="lg" style="left:1516px;top:433px;line-height:10px"><span class="q" style="background:#add8e6"></span>Agg Map<br><span class="q" style="background:#6495ed"></span>Map<br><span class="q" style="background:#4169e1"></span>Others</div>

<div class="s" style="left:1226px;top:487px">Cache Usage</div>
<div class="yl" style="left:1100px;top:516px;width:22px;height:142px"><div>240</div><div>200</div><div>160</div><div>120</div><div>80</div><div>40</div><div>0</div></div>
<div class="yl" style="left:1324px;top:497px;width:30px;height:162px;text-align:left;color:#ee82ee;font-size:9.5px"><div>1,043</div><div>938</div><div>834</div><div>730</div><div>626</div><div>521</div><div>417</div><div>313</div><div>209</div><div>104</div><div>0</div></div>
<svg class="c" style="left:1126px;top:502px;width:195px;height:151px" viewBox="0 0 100 100" preserveAspectRatio="none">
<path class="gl" d="M0 12H100M0 27H100M0 41H100M0 56H100M0 71H100M0 85H100"/>
<polyline style="stroke:#ffa500;stroke-width:1.5" points="0,100 9,100 10,96 12,92 14,100 60,100 62,85 64,96 66,92 68,100 90,100 92,94 94,100 100,100"/>
<polyline style="stroke:#f00;stroke-width:1.5" points="0,100 9,100 10,97 12,96 14,100 62,100 63,96 65,100 67,97 69,100 90,100 91,92 93,100 100,100"/>
<polyline style="stroke:#ff0;stroke-width:2" points="0,90 1,96 3,93 4,100 9,100 11,90 13,90 15,100 28,100 29,97 30,100 40,100 41,98 42,100 60,100 62,70 65,50 66,80 70,90 73,40 75,100 88,100 91,2 93,60 95,70 96,67 98,90 100,90"/>
<polyline style="stroke:#ee82ee;stroke-width:2" points="0,100 2,100 3,2 4,100 9,100 10,68 12,70 13,37 14,100 60,100 62,70 64,96 70,28 73,90 74,100 90,100 92,75 94,100 100,100"/>
<path style="stroke:#eee;stroke-width:1" d="M0 100V0H100"/><path style="stroke:#c020c0;stroke-width:1" d="M100 0V100H0"/>
</svg>
<div class="s" style="left:1495px;top:487px">Memory: Pages</div>
<div class="yl" style="left:1370px;top:515px;width:42px;height:143px"><div>500,000</div><div>400,000</div><div>300,000</div><div>200,000</div><div>100,000</div><div>0</div></div>
<div class="yl yr" style="left:1585px;top:497px;width:48px;height:162px;font-size:9.5px"><div>172,739</div><div>155,466</div><div>138,192</div><div>120,918</div><div>103,644</div><div>86,370</div><div>69,096</div><div>51,822</div><div>34,548</div><div>17,274</div><div>0</div></div>
<svg class="c" style="left:1415px;top:502px;width:167px;height:151px" viewBox="0 0 100 100" preserveAspectRatio="none">
<path class="gl" d="M0 12H100M0 30H100M0 48H100M0 65H100M0 83H100"/>
<polyline style="stroke:#e0ffff;stroke-width:1.5" points="0,96 5,96 8,95 10,99 100,99"/>
<polyline style="stroke:#f0e68c;stroke-width:2" points="0,10 1,43 3,45 4,63 6,40 8,12 9,70 10,100 62,100 63,95 64,100 100,100"/>
<polyline style="stroke:#008b8b;stroke-width:2" points="0,55 2,37 4,33 7,40 9,95 10,100 22,100 24,95 26,18 27,17 29,12 31,15 33,14 36,15 40,8 43,10 46,13 50,13 55,15 57,13 62,15 63,70 64,18 66,19 68,14 70,17 73,14 78,15 82,15 84,18 85,14 89,14 91,68 93,14 96,14 100,14"/>
<path style="stroke:#eee;stroke-width:1" d="M0 100V0H100V100"/>
</svg>
<div class="lg" style="left:1096px;top:667px;line-height:10px"><span class="q" style="background:#adff2f"></span>Inserts/sec<br><span class="q" style="background:#00bfff"></span>Evictions/sec<br><span class="q" style="background:#ffa500"></span>Direct hits/sec</div>
<div class="lg" style="left:1167px;top:667px;line-height:10px"><span class="q" style="background:#f00"></span>Misses/sec<br><span class="q" style="background:#ff0"></span>Lookups/sec</div>
<div class="lg" style="left:1229px;top:667px;line-height:10px;text-align:right">KBs Added/sec<span class="q qr" style="background:#ee82ee"></span><br>KBs Shrunk/sec<span class="q qr" style="background:#9400d3"></span></div>
<div class="lg" style="left:1371px;top:667px;line-height:10px"><span class="q" style="background:#e0ffff"></span>Reads/sec<br><span class="q" style="background:#40e0d0"></span>Writes/sec<br><span class="q" style="background:#008b8b"></span>Faults/sec</div>
<div class="lg" style="left:1501px;top:667px;line-height:10px;text-align:right">Input/sec<span class="q qr" style="background:#f0e68c"></span><br>Output/sec<span class="q qr" style="background:#ffd700"></span></div>

<div class="s" style="left:1226px;top:696px">Locks</div>
<div class="yl" style="left:1100px;top:706px;width:22px;height:162px"><div>90</div><div>80</div><div>70</div><div>60</div><div>50</div><div>40</div><div>30</div><div>20</div><div>10</div><div>0</div></div>
<div class="yl" style="left:1331px;top:706px;width:18px;height:162px;text-align:left;color:#ee82ee;font-size:9.5px"><div>15</div><div>14</div><div>12</div><div>11</div><div>9</div><div>8</div><div>6</div><div>5</div><div>3</div><div>2</div><div>0</div></div>
<svg class="c" style="left:1126px;top:711px;width:203px;height:151px" viewBox="0 0 100 100" preserveAspectRatio="none">
<path class="gl" d="M0 1H100M0 12H100M0 23H100M0 34H100M0 45H100M0 56H100M0 67H100M0 78H100M0 89H100"/>
<polyline style="stroke:#00bfff;stroke-width:1.5" points="0,95 88,100 89.5,3 91,90 100,98"/>
<polyline style="stroke:#ffa500;stroke-width:2" points="0,93 2,100 11,100 12,95 13,98 14.6,95 16,100 28,100 28.5,96 29,100 36,100 37,90 38,98 40,100 47,100 48,98 50,100 59,100 60,93 63,90 66,55 68,100 70,90 71,100 74,95 75,100 80,100 81,97 82,100 87,100 89.5,10 91,90 93,88 95,92 96,88 98,97 100,98"/>
<polyline style="stroke:#ee82ee;stroke-width:2" points="0,48 12,48 13.5,92 14.6,74 27,74 28.5,61 35,61 37,46 39,61 51,61 52.5,74 59,74 60.6,3 63,43 64.8,35 70,35 73,61 75,74 78,74 80,61 83,61 85,74 88,74 90,26 91.5,59 93,74 95,74 96.5,61 98.5,46 100,61"/>
<path style="stroke:#eee;stroke-width:1" d="M0 100V0H100"/><path style="stroke:#c020c0;stroke-width:1" d="M100 0V100"/>
</svg>
<div class="s" style="left:1499px;top:696px">Connections</div>
<div class="yl" style="left:1368px;top:712px;width:25px;height:156px"><div>500</div><div>400</div><div>300</div><div>200</div><div>100</div><div>0</div></div>
<svg class="c" style="left:1396px;top:711px;width:223px;height:151px" viewBox="0 0 100 100" preserveAspectRatio="none">
<path class="gl" d="M0 4H100M0 23H100M0 42H100M0 61H100M0 80H100"/>
<polyline style="stroke:#00ee76;stroke-width:2.5" points="0,80 60,80 63,79 90,79 92,78 100,78"/>
<polyline style="stroke:#ffd700;stroke-width:2.5" points="0,11.5 40,11.5 41,10.6 63,10.6 64,9 74,9 75,8 90,8 91,7 100,7"/>
<polyline style="stroke:#f00;stroke-width:2" points="0,100 1.5,80 3,100 9,100 10,82 12,84 14,100 31,100 32,82 34,100 40,98 42,100 45,98 47,100 50,96 51,98 52,96 53,98 57,100 65,100 66,85 68,100 69,80 71,100 74,70 76,100 90,100 92,40 94,100 95,52 97,100 100,100"/>
<path style="stroke:#eee;stroke-width:1" d="M0 100V0H100V100"/>
</svg>
<div class="lg" style="left:1094px;top:877px;line-height:10px"><span class="q" style="background:#adff2f"></span>Lock Req/sec<br><span class="q" style="background:#00bfff"></span>Unlock Req/sec</div>
<div class="lg" style="left:1173px;top:877px;line-height:10px"><span class="q" style="background:#ffa500"></span>Grants/sec<br><span class="q" style="background:#f00"></span>Denials/sec<br><span class="q" style="background:#ff0"></span>Waits/sec</div>
<div class="lg" style="left:1281px;top:877px;line-height:10px;text-align:right">Curr Locks<span class="q qr" style="background:#ee82ee"></span><br>Curr Lock Waits<span class="q qr" style="background:#9400d3"></span></div>
<div class="lg" style="left:1445px;top:877px;line-height:10px"><span class="q" style="background:#00ee76"></span>Current Connections<br><span class="q" style="background:#ffd700"></span>Current User Sessions<br><span class="q" style="background:#f00"></span>Queued Trace Events</div>

</body></html>
